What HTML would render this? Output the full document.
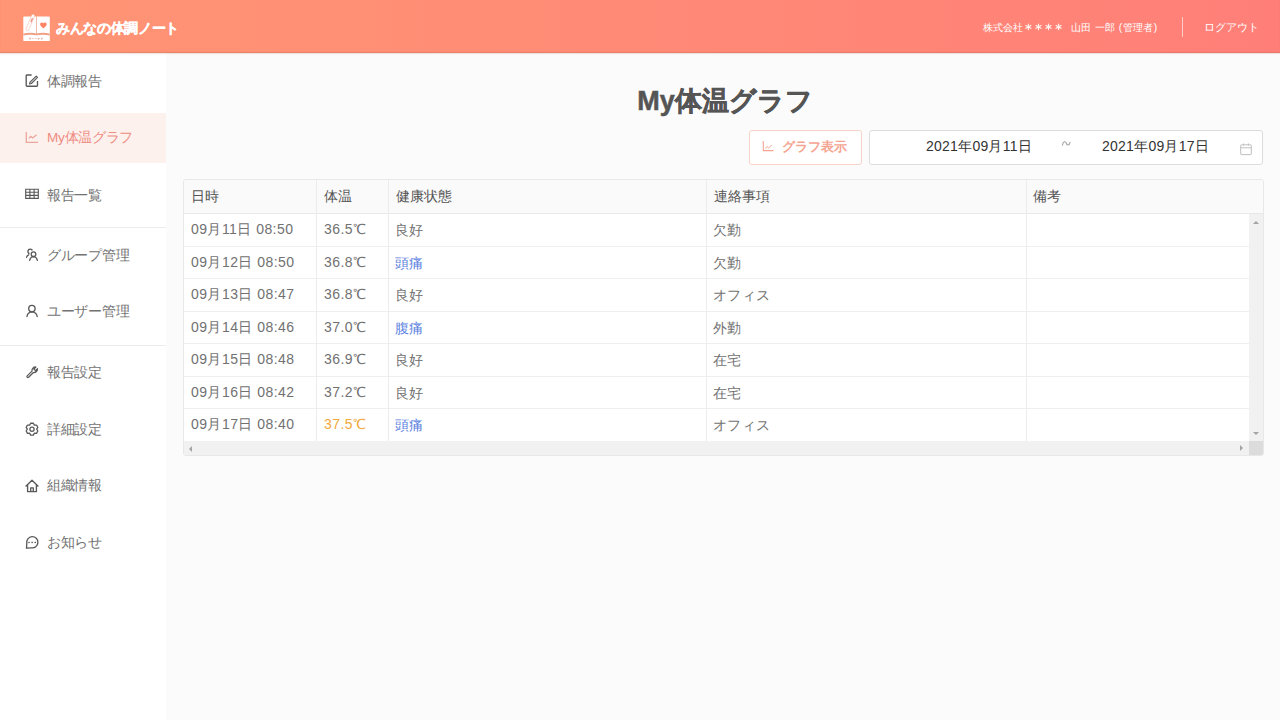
<!DOCTYPE html>
<html lang="ja">
<head>
<meta charset="utf-8">
<style>
*{box-sizing:border-box;margin:0;padding:0}
html,body{width:1280px;height:720px;overflow:hidden}
body{font-family:"Liberation Sans",sans-serif;background:#fbfbfb;color:#666;position:relative}
.hdr{position:absolute;left:0;top:0;width:1280px;height:53px;background:linear-gradient(90deg,#ff9574 0%,#ff8a76 50%,#ff7f78 100%);box-shadow:inset 0 -1px 1px rgba(150,80,60,.22),0 1px 1px rgba(200,130,110,.2);z-index:5}
.logo{position:absolute;left:20px;top:12px;width:34px;height:32px}
.brand{position:absolute;left:56px;top:20px;font-size:13.5px;font-weight:bold;color:#fff;line-height:18px;white-space:nowrap;-webkit-text-stroke:.35px #fff;letter-spacing:-.35px}
.user{position:absolute;left:983px;top:20.5px;font-size:10.4px;color:#fff;line-height:14px;white-space:nowrap}
.vsep{position:absolute;left:1182px;top:17px;width:1px;height:20px;background:rgba(255,255,255,.6)}
.logout{position:absolute;left:1204px;top:20px;font-size:11px;color:#fff;line-height:14px;white-space:nowrap}
.side{position:absolute;left:0;top:53px;width:166px;height:667px;background:#fff}
.item{position:absolute;left:0;width:166px;height:50px}
.item.act{background:#fdf1ee}
.item .tx{position:absolute;left:47px;top:16.5px;font-size:13.6px;line-height:18px;color:#727272;white-space:nowrap;letter-spacing:-.3px}
.item.act .tx{color:#ee8c82;top:15.5px}
.hsep{position:absolute;left:0;width:166px;height:1px;background:#ececec}
.sic{position:absolute;left:20px;width:24px;height:24px}
.title{position:absolute;left:168px;width:1114px;top:84px;text-align:center;font-size:27px;font-weight:bold;color:#555;line-height:34px;-webkit-text-stroke:.5px #555}
.btn{position:absolute;left:749px;top:130px;width:113px;height:35px;border:1px solid #f8d3c9;border-radius:3px;background:#fff}
.btn .tx{position:absolute;left:32px;top:7px;font-size:13px;font-weight:bold;color:#f5a592;line-height:18px;white-space:nowrap}
.btn svg{position:absolute;left:10px;top:8px;width:16px;height:16px}
.range{position:absolute;left:869px;top:130px;width:394px;height:35px;border:1px solid #dcdcdc;border-radius:3px;background:#fff}
.range .d{position:absolute;top:6px;font-size:14px;color:#333;line-height:18px;white-space:nowrap;letter-spacing:.25px}
.range svg{position:absolute;left:368px;top:10px;width:16px;height:16px}
.tbl{position:absolute;left:183px;top:179px;width:1081px;height:277px;border:1px solid #e8e8e8;border-radius:3px;background:#fff;overflow:hidden}
.th{position:absolute;left:0;top:0;width:1079px;height:34px;background:#fafafa;border-bottom:1px solid #e8e8e8}
.cell{position:absolute;font-size:14px;line-height:18px;white-space:nowrap}
.th .cell{color:#555;top:7px}
.row{position:absolute;left:0;width:1065px;height:32.5px;border-bottom:1px solid #efefef}
.row.nb{border-bottom:none}
.row .cell{top:6px;color:#717171;letter-spacing:.45px}
.vline{position:absolute;width:1px;background:#ececec}
.blue{color:#5b7fe0 !important}
.orange{color:#f2a93b !important}
.vscroll{position:absolute;left:1065px;top:34px;width:14px;height:228px;background:#f1f1f1}
.hscroll{position:absolute;left:0;top:261px;width:1065px;height:14px;background:#f1f1f1}
.corner{position:absolute;left:1065px;top:261px;width:14px;height:14px;background:#dcdcdc}
.arr{position:absolute;width:0;height:0;border-style:solid}
</style>
</head>
<body>
<div class="hdr">
  <svg class="logo" viewBox="0 0 34 32">
    <path d="M3.3 5.4Q3.3 4.4 4.3 4.4H28.8Q29.8 4.4 29.8 5.4V24.2H3.3Z" fill="#fff"/>
    <path d="M16.5 4.4V22.2" stroke="#efb3a3" stroke-width=".9"/>
    <path d="M3.3 22.6Q9.5 21 16.5 22.4Q23.5 21 29.8 22.6" fill="none" stroke="#f0a085" stroke-width="1.8"/>
    <rect x="3.3" y="23.9" width="26.5" height="5.1" fill="#fff"/>
    <path d="M9.4 26.4h1.6M10 25.6v2.2M12.2 26.6h1.5M15.1 26.4h1.5M18.2 25.8v2M18.2 26.6h1.6M21 26.6h1.5M21.8 25.7v2.1" stroke="#e9a89a" stroke-width=".8"/>
    <path d="M7.4 17L13.1 4" stroke="#f9cabd" stroke-width="3.6" stroke-linecap="round"/>
    <path d="M7.4 17L13.1 4" stroke="#fff" stroke-width="2.2" stroke-linecap="round"/>
    <path d="M11.2 9.6L12.3 6.8" stroke="#f0958a" stroke-width="1.5" stroke-linecap="round"/>
    <path d="M23.4 11.3C22.6 10 20.3 10.1 20.1 12.2C20 13.8 22.2 15.3 23.4 16.2C24.6 15.3 26.8 13.8 26.7 12.2C26.5 10.1 24.2 10 23.4 11.3Z" fill="#ff8466"/>
  </svg>
  <div class="brand">みんなの体調ノート</div>
  <div class="user">株式会社</div><svg style="position:absolute;left:1020px;top:18px;width:50px;height:18px" viewBox="1020 18 50 18"><path d="M1028.40 24.00L1028.40 29.80M1025.89 25.45L1030.91 28.35M1030.91 25.45L1025.89 28.35M1038.50 24.00L1038.50 29.80M1035.99 25.45L1041.01 28.35M1041.01 25.45L1035.99 28.35M1048.50 24.00L1048.50 29.80M1045.99 25.45L1051.01 28.35M1051.01 25.45L1045.99 28.35M1058.60 24.00L1058.60 29.80M1056.09 25.45L1061.11 28.35M1061.11 25.45L1056.09 28.35" stroke="#fff4ee" stroke-width="1.1" stroke-linecap="round"/></svg><div class="user" style="left:1071px;letter-spacing:.35px">山田 一郎 (管理者)</div>
  <div class="vsep"></div>
  <div class="logout">ログアウト</div>
</div>
<div class="side">
  <div class="item" style="top:3px"><div class="tx">体調報告</div></div>
  <div class="item act" style="top:60px"><div class="tx">My体温グラフ</div></div>
  <div class="item" style="top:117px"><div class="tx">報告一覧</div></div>
  <div class="hsep" style="top:174px"></div>
  <div class="item" style="top:177px"><div class="tx">グループ管理</div></div>
  <div class="item" style="top:233px"><div class="tx">ユーザー管理</div></div>
  <div class="hsep" style="top:292px"></div>
  <div class="item" style="top:294px"><div class="tx">報告設定</div></div>
  <div class="item" style="top:351px"><div class="tx">詳細設定</div></div>
  <div class="item" style="top:407px"><div class="tx">組織情報</div></div>
  <div class="item" style="top:464px"><div class="tx">お知らせ</div></div>
</div>
<svg class="sic" style="top:70px" viewBox="0 0 24 24"><path d="M11.6 5H7a.8.8 0 0 0-.8.8v9.6a.8.8 0 0 0 .8.8h9.7a.8.8 0 0 0 .8-.8V11" fill="none" stroke="#595959" stroke-width="1.35"/><path d="M10.1 12.2L16.2 6.1l1.3 1.3-6.1 6.1-1.8.5z" fill="none" stroke="#595959" stroke-width="1.2" stroke-linejoin="round"/></svg>
<svg class="sic" style="top:126px" viewBox="0 0 24 24"><path d="M6.3 6V16.4H18" fill="none" stroke="#eba59c" stroke-width="1.3"/><path d="M8.7 12.4L10.9 10.3L12.7 12L16.7 8.8" fill="none" stroke="#eba59c" stroke-width="1.2" stroke-linejoin="round"/></svg>
<svg class="sic" style="top:182px" viewBox="0 0 24 24"><path d="M5.7 7.2H18.3V16.3H5.7Z M9.9 7.2V16.3 M14.1 7.2V16.3 M5.7 10.2H18.3 M5.7 13.3H18.3" fill="none" stroke="#595959" stroke-width="1.15"/></svg>
<svg class="sic" style="top:243px" viewBox="0 0 24 24"><circle cx="10.2" cy="8.4" r="2.25" fill="none" stroke="#595959" stroke-width="1.3"/><path d="M6.5 14.3Q7.1 12.5 8.7 11.9" fill="none" stroke="#595959" stroke-width="1.3" stroke-linecap="round"/><circle cx="13.5" cy="11.2" r="2.3" fill="#fff" stroke="#fff" stroke-width="3.4"/><circle cx="13.5" cy="11.2" r="2.3" fill="none" stroke="#595959" stroke-width="1.3"/><path d="M9.6 17.3Q10.4 13.9 13.5 13.7Q16.6 13.9 17.4 17.3" fill="none" stroke="#595959" stroke-width="1.3" stroke-linecap="round"/></svg>
<svg class="sic" style="top:299px" viewBox="0 0 24 24"><circle cx="11.9" cy="9.6" r="3.2" fill="none" stroke="#595959" stroke-width="1.35"/><path d="M7 17.5Q7.6 13.2 12 12.9Q16.5 13.2 17.2 17.5" fill="none" stroke="#595959" stroke-width="1.35" stroke-linecap="round"/></svg>
<svg class="sic" style="top:360px" viewBox="0 0 24 24"><path d="M7.2 15.9L12 11.1A3.6 3.6 0 0 1 15.9 7L13.9 9L15.5 10.6L17.5 8.6A3.6 3.6 0 0 1 13.4 12.5L8.6 17.3Q7.9 17.9 7.2 17.3Q6.6 16.6 7.2 15.9Z" fill="none" stroke="#595959" stroke-width="1.25" stroke-linejoin="round"/></svg>
<svg class="sic" style="top:417px" viewBox="0 0 24 24"><path d="M9.65 8.13 L10.63 6.26 L13.37 6.26 L14.35 8.13 L16.46 8.04 L17.83 10.42 L16.70 12.20 L17.83 13.98 L16.46 16.36 L14.35 16.27 L13.37 18.14 L10.63 18.14 L9.65 16.27 L7.54 16.36 L6.17 13.98 L7.30 12.20 L6.17 10.42 L7.54 8.04Z" fill="none" stroke="#595959" stroke-width="1.3" stroke-linejoin="round"/><circle cx="12" cy="12.2" r="2.1" fill="none" stroke="#595959" stroke-width="1.3"/></svg>
<svg class="sic" style="top:473px" viewBox="0 0 24 24"><path d="M5.6 13.4L12 7.2L18.4 13.4M7.6 12V18.6H16.4V12M10.7 18.6V14.8H13.3V18.6" fill="none" stroke="#595959" stroke-width="1.35" stroke-linejoin="round"/></svg>
<svg class="sic" style="top:530px" viewBox="0 0 24 24"><path d="M6.79 13.27A5.6 5.6 0 1 1 11.33 17.8L6.5 18.2Z" fill="none" stroke="#595959" stroke-width="1.35" stroke-linejoin="round"/><rect x="8.3" y="11.8" width="1.5" height="1.3" fill="#595959"/><rect x="11.4" y="11.8" width="1.5" height="1.3" fill="#595959"/><rect x="14.5" y="11.8" width="1.5" height="1.3" fill="#595959"/></svg>
<div class="title">My体温グラフ</div>
<div class="btn"><svg viewBox="0 0 16 16"><path d="M3.3 2V11.6H13.5" fill="none" stroke="#f5a592" stroke-width="1.1"/><path d="M5.3 9.3L7.1 7.6L8.5 8.9L11.8 6.2" fill="none" stroke="#f5a592" stroke-width="1" stroke-linejoin="round"/></svg><div class="tx">グラフ表示</div></div>
<div class="range">
  <div class="d" style="left:56px">2021年09月11日</div>
  <svg style="left:188px;top:6px;width:16px;height:16px" viewBox="1058 137 16 16"><path d="M1062.4 145.2C1063.2 141 1065.5 141 1066.3 143.2C1067.1 145.6 1069.3 145.8 1070 142.3" fill="none" stroke="#a6a6a6" stroke-width="1.15" stroke-linecap="round"/></svg>
  <div class="d" style="left:232px">2021年09月17日</div>
  <svg viewBox="0 0 16 16"><rect x="2.7" y="3.8" width="10.6" height="9.8" rx=".6" fill="none" stroke="#bfbfbf" stroke-width="1"/><path d="M2.7 6.8H13.3M5.6 2.5V4.6M10.4 2.5V4.6" fill="none" stroke="#bfbfbf" stroke-width="1"/></svg>
</div>
<div class="tbl">
  <div class="th">
    <div class="cell" style="left:7px">日時</div>
    <div class="cell" style="left:140px">体温</div>
    <div class="cell" style="left:212px">健康状態</div>
    <div class="cell" style="left:530px">連絡事項</div>
    <div class="cell" style="left:849px">備考</div>
  </div>
  <div class="row" style="top:34.0px"><div class="cell" style="left:7px">09月11日 08:50</div><div class="cell " style="left:140px">36.5℃</div><div class="cell " style="left:211px;top:7px">良好</div><div class="cell" style="left:529px;top:7px">欠勤</div></div>
  <div class="row" style="top:66.5px"><div class="cell" style="left:7px">09月12日 08:50</div><div class="cell " style="left:140px">36.8℃</div><div class="cell blue" style="left:211px;top:7px">頭痛</div><div class="cell" style="left:529px;top:7px">欠勤</div></div>
  <div class="row" style="top:99.0px"><div class="cell" style="left:7px">09月13日 08:47</div><div class="cell " style="left:140px">36.8℃</div><div class="cell " style="left:211px;top:7px">良好</div><div class="cell" style="left:529px;top:7px">オフィス</div></div>
  <div class="row" style="top:131.5px"><div class="cell" style="left:7px">09月14日 08:46</div><div class="cell " style="left:140px">37.0℃</div><div class="cell blue" style="left:211px;top:7px">腹痛</div><div class="cell" style="left:529px;top:7px">外勤</div></div>
  <div class="row" style="top:164.0px"><div class="cell" style="left:7px">09月15日 08:48</div><div class="cell " style="left:140px">36.9℃</div><div class="cell " style="left:211px;top:7px">良好</div><div class="cell" style="left:529px;top:7px">在宅</div></div>
  <div class="row" style="top:196.5px"><div class="cell" style="left:7px">09月16日 08:42</div><div class="cell " style="left:140px">37.2℃</div><div class="cell " style="left:211px;top:7px">良好</div><div class="cell" style="left:529px;top:7px">在宅</div></div>
  <div class="row nb" style="top:229.0px"><div class="cell" style="left:7px">09月17日 08:40</div><div class="cell orange" style="left:140px">37.5℃</div><div class="cell blue" style="left:211px;top:7px">頭痛</div><div class="cell" style="left:529px;top:7px">オフィス</div></div>
  <div class="vline" style="left:132px;top:0;height:261px"></div>
  <div class="vline" style="left:204px;top:0;height:261px"></div>
  <div class="vline" style="left:522px;top:0;height:261px"></div>
  <div class="vline" style="left:842px;top:0;height:261px"></div>
  <div class="vscroll"></div>
  <div class="hscroll"></div>
  <div class="corner"></div>
  <div class="arr" style="left:1069px;top:41px;border-width:0 3px 3px 3px;border-color:transparent transparent #a3a3a3 transparent"></div>
  <div class="arr" style="left:1069px;top:252px;border-width:3px 3px 0 3px;border-color:#a3a3a3 transparent transparent transparent"></div>
  <div class="arr" style="left:5px;top:266px;border-width:3px 3px 3px 0;border-color:transparent #a3a3a3 transparent transparent"></div>
  <div class="arr" style="left:1056px;top:265px;border-width:3px 0 3px 3px;border-color:transparent transparent transparent #a3a3a3"></div>
</div>
</body>
</html>
